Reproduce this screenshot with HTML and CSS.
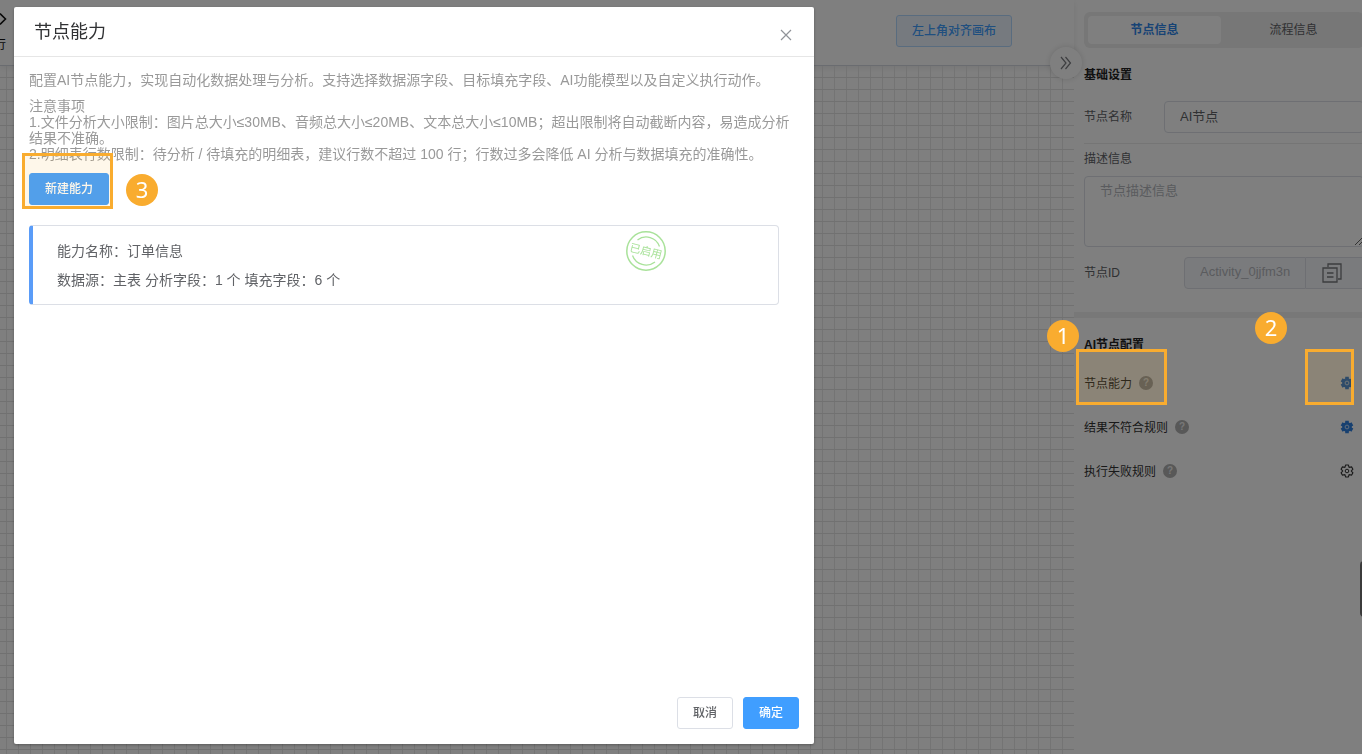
FILE: index.html
```html
<!DOCTYPE html>
<html lang="zh-CN">

<head>
    <meta charset="UTF-8">
    <meta name="viewport" content="width=device-width, initial-scale=1.0">
    <title>节点能力</title>
    <link rel="stylesheet" href="styles.css">
</head>

<body>
    <!-- 流程设计器 -->
    <div class="designer">
        <main class="workspace">
            <div class="toolbar">
                <div class="tool-item">
                    <svg width="8" height="16" viewBox="0 0 8 16"><path d="M0 2.5 L5.5 8 L0 13.5" fill="none" stroke="#111" stroke-width="1.6"/></svg>
                    <span>行</span>
                </div>
                <button class="btn btn-plain">左上角对齐画布</button>
            </div>
            <div class="canvas"></div>
            <button class="collapse" aria-label="收起">
                <svg width="12" height="14" viewBox="0 0 12 14"><path d="M1 1 L6 7 L1 13 M5.5 1 L10.5 7 L5.5 13" fill="none" stroke="#7a7c80" stroke-width="1.2"/></svg>
            </button>
        </main>

        <!-- 右侧属性面板 -->
        <aside class="panel">
            <div class="panel-inner">
                <div class="tabs">
                    <button class="tab active">节点信息</button>
                    <button class="tab">流程信息</button>
                </div>
                <h3>基础设置</h3>
                <div class="form-row name-row">
                    <label for="nodeName">节点名称</label>
                    <input type="text" id="nodeName" class="field" value="AI节点">
                </div>
                <div class="desc">
                    <label for="nodeDesc">描述信息</label>
                    <textarea id="nodeDesc" class="field" placeholder="节点描述信息"></textarea>
                </div>
                <div class="form-row">
                    <label for="nodeId">节点ID</label>
                    <div class="id-group">
                        <input type="text" id="nodeId" class="field" value="Activity_0jjfm3n" disabled>
                        <button class="copy" aria-label="复制">
                            <svg width="20" height="20" viewBox="0 0 20 20" fill="none" stroke="#77797d" stroke-width="1.3"><path d="M6 4 V1 H19 V16 H16"/><path d="M1 5 H15 V19 H1 Z M5 10 H11.5 M5 14 H11.5"/></svg>
                        </button>
                    </div>
                </div>
            </div>
            <div class="band"></div>
            <div class="panel-inner">
                <h3>AI节点配置</h3>
                <div class="rule">
                    <span>节点能力</span><i class="help">?</i>
                    <button class="gear" aria-label="设置节点能力"><svg viewBox="0 0 14 14"><use href="#gear-fill"/></svg></button>
                </div>
                <div class="rule">
                    <span>结果不符合规则</span><i class="help">?</i>
                    <button class="gear" aria-label="设置结果不符合规则"><svg viewBox="0 0 14 14"><use href="#gear-fill"/></svg></button>
                </div>
                <div class="rule">
                    <span>执行失败规则</span><i class="help">?</i>
                    <button class="gear" aria-label="设置执行失败规则"><svg viewBox="0 0 14 14"><use href="#gear-line"/></svg></button>
                </div>
            </div>
            <div class="side-handle"></div>
        </aside>
    </div>

    <!-- 节点能力弹窗 -->
    <div class="overlay">
        <div class="dialog" role="dialog" aria-labelledby="dialogTitle">
            <div class="dialog-header">
                <h2 id="dialogTitle">节点能力</h2>
                <button class="close" aria-label="关闭">
                    <svg width="12" height="12" viewBox="0 0 12 12"><path d="M1 1 L11 11 M11 1 L1 11" stroke="#909399" stroke-width="1.2"/></svg>
                </button>
            </div>
            <div class="dialog-body">
                <p class="intro">配置AI节点能力，实现自动化数据处理与分析。支持选择数据源字段、目标填充字段、AI功能模型以及自定义执行动作。</p>
                <div class="notes">
                    <p>注意事项</p>
                    <p>1.文件分析大小限制：图片总大小≤30MB、音频总大小≤20MB、文本总大小≤10MB；超出限制将自动截断内容，易造成分析结果不准确。</p>
                    <p>2.明细表行数限制：待分析 / 待填充的明细表，建议行数不超过 100 行；行数过多会降低 AI 分析与数据填充的准确性。</p>
                </div>
                <button class="btn btn-primary">新建能力</button>
                <div class="card">
                    <p>能力名称：订单信息</p>
                    <p>数据源：主表 分析字段：1 个 填充字段：6 个</p>
                    <svg class="stamp" width="40" height="40" viewBox="0 0 40 40" fill="none" stroke="#a9e29a">
                        <circle cx="20" cy="20" r="19.2" stroke-width="1.5"/>
                        <path d="M11.5 9 A14 14 0 0 1 33.5 15.5 M6.5 24.5 A14.5 14.5 0 0 0 29 31" stroke-width="1.3"/>
                        <text x="20" y="24" text-anchor="middle" transform="rotate(14 20 20)" font-size="11" fill="#a9e29a" stroke="none">已启用</text>
                    </svg>
                </div>
            </div>
            <div class="dialog-footer">
                <button class="btn">取消</button>
                <button class="btn btn-primary">确定</button>
            </div>
        </div>
    </div>

    <!-- 操作步骤标注 -->
    <div class="guide">
        <div class="mark mark-create"></div>
        <div class="mark mark-ability"></div>
        <div class="mark mark-gear"></div>
        <span class="step step-1">1</span>
        <span class="step step-2">2</span>
        <span class="step step-3">3</span>
    </div>

    <!-- 图标定义 -->
    <svg class="defs" width="0" height="0">
        <symbol id="gear-fill" viewBox="0 0 14 14">
            <circle cx="7" cy="7" r="4.8" fill="#2f80e0"/>
            <path d="M7 0.8 V13.2 M1.6 3.9 L12.4 10.1 M12.4 3.9 L1.6 10.1" stroke="#2f80e0" stroke-width="3.6"/>
            <circle cx="7" cy="7" r="1.9" fill="#2f80e0" stroke="#c5ddf8" stroke-width="1"/>
        </symbol>
        <symbol id="gear-line" viewBox="0 0 14 14">
            <path d="M5.7 1 H8.3 L9.15 3.28 L11.6 2.85 L12.9 5.1 L11.3 7 L12.9 8.9 L11.6 11.15 L9.15 10.72 L8.3 13 H5.7 L4.85 10.72 L2.4 11.15 L1.1 8.9 L2.7 7 L1.1 5.1 L2.4 2.85 L4.85 3.28 Z" fill="none" stroke="#333" stroke-width="1.1"/>
            <circle cx="7" cy="7" r="1.8" fill="none" stroke="#333" stroke-width="1"/>
        </symbol>
    </svg>
</body>

</html>
```

FILE: styles.css
```css
* {
    margin: 0;
    padding: 0;
    box-sizing: border-box;
}

body {
    font-family: "Liberation Sans", "Noto Sans CJK SC", sans-serif;
    font-size: 12px;
    color: #606266;
    background-color: white;
    overflow: hidden;
}

button,
input,
textarea {
    font-family: inherit;
}

button {
    border: none;
    background: none;
    cursor: pointer;
}

svg {
    display: block;
}

.defs {
    position: absolute;
}

/* 设计器布局 */
.designer {
    display: flex;
    height: 100vh;
}

.workspace {
    position: relative;
    flex: 1;
    display: flex;
    flex-direction: column;
}

.toolbar {
    display: flex;
    justify-content: space-between;
    height: 66px;
    padding: 11px 62px 0 0;
    border-bottom: 1px solid #d5d8e0;
    box-shadow: 0 2px 6px rgba(0, 0, 0, 0.08);
    overflow: hidden;
}

.tool-item {
    margin-left: -6px;
    color: #111;
}

.tool-item svg {
    margin: 0 0 8px 6px;
}

.toolbar .btn {
    margin-top: 4px;
}

/* 网格画布 */
.canvas {
    flex: 1;
    background-image:
        linear-gradient(#e2e2e2 1px, transparent 1px),
        linear-gradient(90deg, #e9e9e9 1px, transparent 1px);
    background-size: 12px 12px;
    background-position: 6px 11px;
}

.collapse {
    position: absolute;
    top: 47px;
    right: -8px;
    z-index: 1;
    display: flex;
    align-items: center;
    justify-content: center;
    width: 32px;
    height: 32px;
    border-radius: 50%;
    background-color: white;
    box-shadow: 0 0 6px rgba(0, 0, 0, 0.15);
}

/* 属性面板 */
.panel {
    position: relative;
    width: 288px;
    overflow: hidden;
}

.panel-inner {
    width: 290px;
    padding-left: 10px;
}

.tabs {
    display: flex;
    gap: 6px;
    margin: 12px 0 17px;
    padding: 4px;
    border-radius: 6px;
    background-color: #eee;
}

.tab {
    flex: 1;
    height: 28px;
    padding-bottom: 4px;
    border-radius: 4px;
    font-size: 12px;
    color: #606266;
}

.tab.active {
    background-color: white;
    color: #2f86ea;
    font-weight: bold;
}

h3 {
    font-size: 12px;
    line-height: 20px;
    color: #222;
}

.form-row {
    display: flex;
    align-items: center;
}

.form-row label {
    flex: 1;
    padding-bottom: 4px;
}

.name-row {
    margin-top: 16px;
    padding-bottom: 10px;
    border-bottom: 1px solid #ebebeb;
}

.field {
    height: 32px;
    padding: 0 15px 3px;
    border: 1px solid #dcdfe6;
    border-radius: 4px;
    background-color: white;
    font-size: 13px;
    color: #606266;
}

.name-row .field {
    width: 200px;
}

.desc {
    padding: 5px 0 10px;
}

.desc label {
    display: block;
    margin-bottom: 7px;
    line-height: 20px;
}

.desc .field {
    display: block;
    width: 100%;
    height: 71px;
    padding: 4px 15px;
    line-height: 20px;
    resize: vertical;
}

.field::placeholder {
    color: #b4b7bd;
}

.id-group {
    display: flex;
    width: 180px;
}

.id-group .field {
    width: 122px;
    border-radius: 4px 0 0 4px;
    background-color: #f5f7fa;
    color: #b4b7bd;
}

.copy {
    flex: 1;
    padding-left: 16px;
    border: 1px solid #dcdfe6;
    border-left: none;
    background-color: #f5f7fa;
}

.band {
    height: 6px;
    margin: 23px 0 17px;
    background-color: #f0f0f0;
}

.rule {
    display: flex;
    align-items: center;
    height: 44px;
    padding-right: 10px;
    color: #333;
}

h3 + .rule {
    margin-top: 6px;
}

.rule span {
    padding-bottom: 1px;
}

.help {
    width: 14px;
    height: 14px;
    margin-left: 7px;
    border-radius: 50%;
    background-color: #b0b0b0;
    color: #eee;
    font-size: 10px;
    font-style: normal;
    font-weight: bold;
    line-height: 14px;
    text-align: center;
}

.gear {
    width: 14px;
    height: 14px;
    margin-left: auto;
}

.side-handle {
    position: absolute;
    top: 561px;
    right: -6px;
    width: 8px;
    height: 56px;
    border-radius: 4px;
    background-color: #777;
}

/* 按钮 */
.btn {
    height: 32px;
    padding: 0 15px 3px;
    border: 1px solid #dcdfe6;
    border-radius: 3px;
    background-color: white;
    font-size: 12px;
    font-weight: 500;
    color: #606266;
}

.btn-plain {
    border-color: #b3d8ff;
    background-color: #ecf5ff;
    color: #409eff;
}

.btn-primary {
    border-color: #409eff;
    background-color: #409eff;
    color: white;
}

/* 弹窗 */
.overlay {
    position: fixed;
    inset: 0;
    z-index: 10;
    display: flex;
    padding: 7px 14px 10px;
    background-color: rgba(0, 0, 0, 0.5);
}

.dialog {
    display: flex;
    flex-direction: column;
    width: 100%;
    max-width: 800px;
    border-radius: 2px;
    background-color: white;
    box-shadow: 0 1px 3px rgba(0, 0, 0, 0.3);
}

.dialog-header {
    display: flex;
    align-items: center;
    justify-content: space-between;
    height: 50px;
    padding: 0 22px 0 20px;
    border-bottom: 1px solid #e6e6e6;
}

.dialog-header h2 {
    padding-bottom: 4px;
    font-size: 18px;
    font-weight: normal;
    color: #303133;
}

.close {
    padding-top: 6px;
}

.dialog-body {
    flex: 1;
    padding: 13px 15px;
    font-size: 14px;
}

.intro {
    margin-bottom: 8px;
    line-height: 20px;
    color: #999;
}

.notes {
    margin-bottom: 11px;
    line-height: 16px;
    color: #999;
}

.card {
    position: relative;
    margin: 20px 20px 0 0;
    padding: 11px 24px 9px;
    border: 1px solid #dcdfe6;
    border-left: 4px solid #5a9cf8;
    border-radius: 4px;
    line-height: 29px;
}

/* 已启用印章 */
.stamp {
    position: absolute;
    top: 5px;
    right: 112px;
}

.dialog-footer {
    display: flex;
    justify-content: flex-end;
    gap: 10px;
    padding: 15px;
}

/* 步骤标注 */
.guide {
    position: fixed;
    inset: 0;
    z-index: 20;
    pointer-events: none;
}

.mark {
    position: absolute;
    width: 91px;
    height: 56px;
    border: 3px solid #f9ac2f;
    background-color: rgba(249, 172, 47, 0.1);
}

.mark-create {
    top: 153px;
    left: 22px;
}

.mark-ability {
    top: 349px;
    right: 195px;
}

.mark-gear {
    top: 349px;
    right: 8px;
    width: 49px;
}

.step {
    position: absolute;
    width: 32px;
    height: 32px;
    border-radius: 50%;
    background-color: #f9ac2f;
    color: white;
    font-family: "Noto Sans", sans-serif;
    font-size: 22px;
    line-height: 30px;
    text-align: center;
}

.step-1 {
    top: 320px;
    right: 283px;
}

.step-2 {
    top: 312px;
    right: 75px;
}

.step-3 {
    top: 174px;
    left: 126px;
}
```
